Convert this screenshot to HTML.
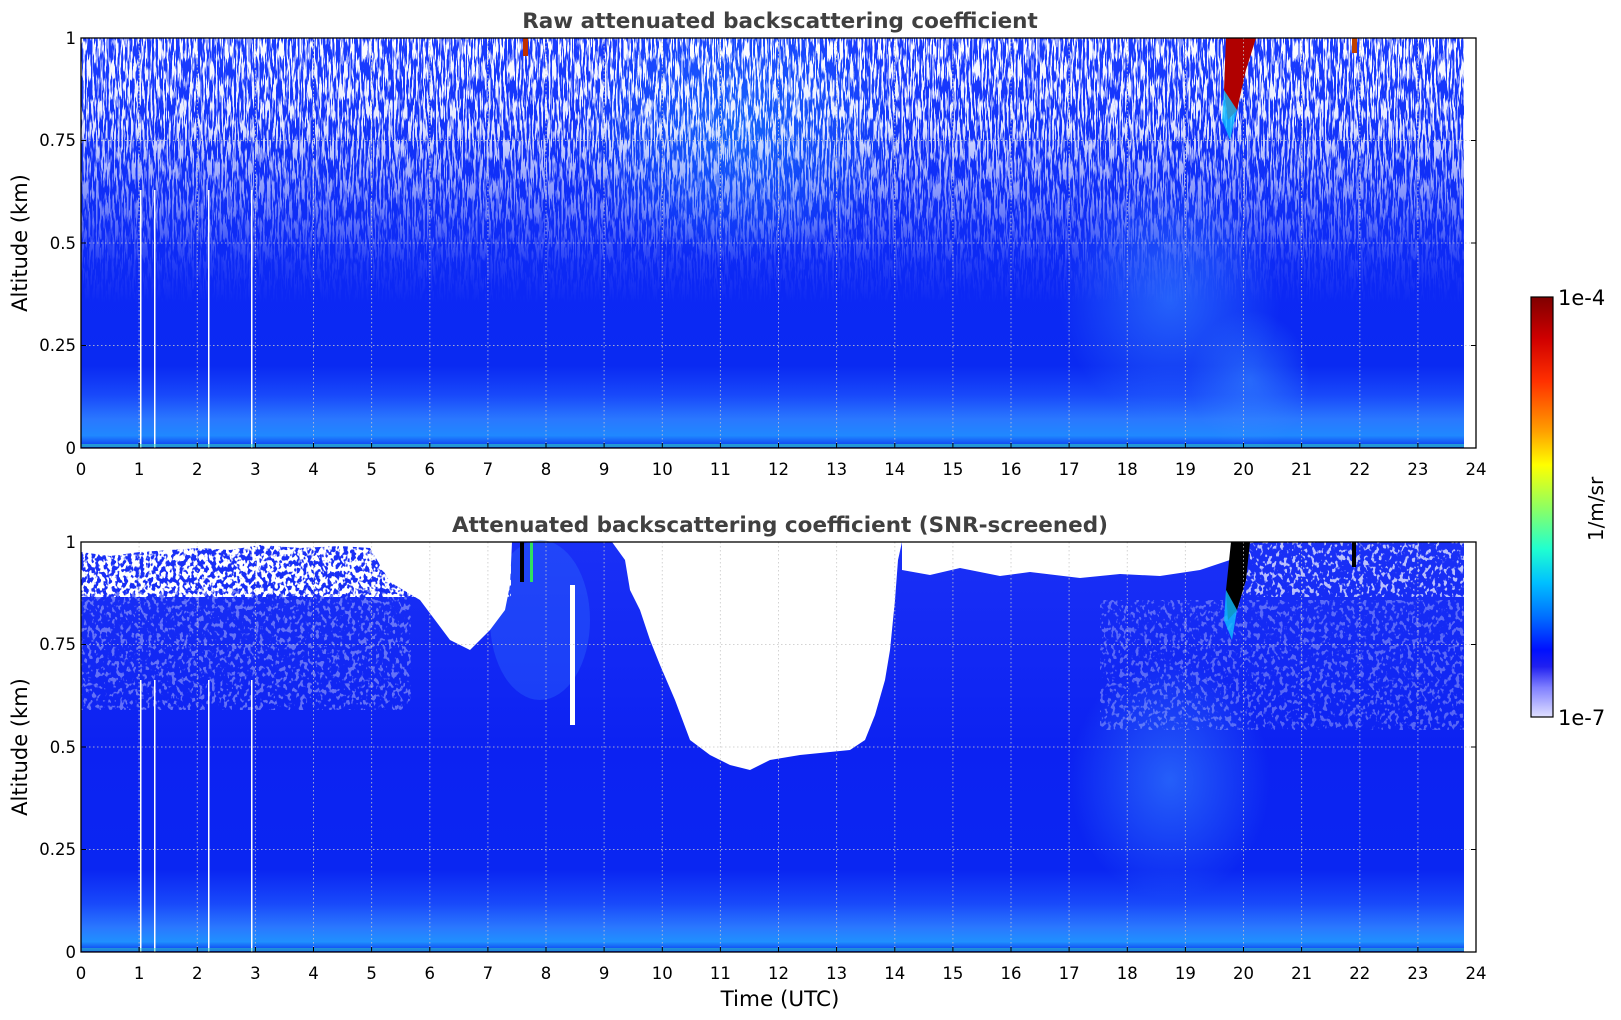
<!DOCTYPE html>
<html><head><meta charset="utf-8"><style>
html,body{margin:0;padding:0;background:#fff;}
svg{display:block;font-family:"DejaVu Sans","Liberation Sans",sans-serif;}
</style></head><body>
<svg width="1621" height="1020" viewBox="0 0 1621 1020" xmlns="http://www.w3.org/2000/svg">
<defs>
  <linearGradient id="gTop" x1="0" y1="0" x2="0" y2="1">
    <stop offset="0" stop-color="#1a3cff"/>
    <stop offset="0.3" stop-color="#1030f8"/>
    <stop offset="0.6" stop-color="#0c28f4"/>
    <stop offset="0.8" stop-color="#0a2af2"/>
    <stop offset="0.87" stop-color="#1848fa"/>
    <stop offset="0.93" stop-color="#2a78ff"/>
    <stop offset="0.97" stop-color="#2088ff"/>
    <stop offset="1" stop-color="#0a30f0"/>
  </linearGradient>
  <linearGradient id="gBot" x1="0" y1="0" x2="0" y2="1">
    <stop offset="0" stop-color="#1a30f6"/>
    <stop offset="0.5" stop-color="#0c22f2"/>
    <stop offset="0.8" stop-color="#0a26f2"/>
    <stop offset="0.88" stop-color="#1848fa"/>
    <stop offset="0.94" stop-color="#2a78ff"/>
    <stop offset="0.975" stop-color="#2090ff"/>
    <stop offset="1" stop-color="#0a30f0"/>
  </linearGradient>
  <linearGradient id="fadeMask" x1="0" y1="0" x2="0" y2="1">
    <stop offset="0" stop-color="#fff" stop-opacity="1"/>
    <stop offset="0.2" stop-color="#fff" stop-opacity="0.9"/>
    <stop offset="0.4" stop-color="#fff" stop-opacity="0.45"/>
    <stop offset="0.55" stop-color="#fff" stop-opacity="0.1"/>
    <stop offset="0.65" stop-color="#fff" stop-opacity="0"/>
  </linearGradient>
  <mask id="m1"><rect x="81" y="38" width="1395" height="410" fill="url(#fadeMask)"/></mask>
  <filter id="speck" x="0" y="0" width="100%" height="100%">
    <feTurbulence type="fractalNoise" baseFrequency="0.55 0.05" numOctaves="2" seed="3"/>
    <feColorMatrix type="matrix" values="0 0 0 0 1  0 0 0 0 1  0 0 0 0 1  14 0 0 0 -6.8"/>
  </filter>
  <filter id="speck2" x="0" y="0" width="100%" height="100%">
    <feTurbulence type="fractalNoise" baseFrequency="0.25 0.18" numOctaves="2" seed="7"/>
    <feColorMatrix type="matrix" values="0 0 0 0 1  0 0 0 0 1  0 0 0 0 1  12 0 0 0 -6.6"/>
  </filter>
  <filter id="speck3" x="0" y="0" width="100%" height="100%">
    <feTurbulence type="fractalNoise" baseFrequency="0.25 0.18" numOctaves="2" seed="11"/>
    <feColorMatrix type="matrix" values="0 0 0 0 1  0 0 0 0 1  0 0 0 0 1  12 0 0 0 -5.4"/>
  </filter>
  <linearGradient id="jet" x1="0" y1="0" x2="0" y2="1">
    <stop offset="0" stop-color="#7f0000"/>
    <stop offset="0.1" stop-color="#d00000"/>
    <stop offset="0.2" stop-color="#ff3000"/>
    <stop offset="0.32" stop-color="#ffa000"/>
    <stop offset="0.4" stop-color="#ffff00"/>
    <stop offset="0.5" stop-color="#90ff60"/>
    <stop offset="0.6" stop-color="#20ffd0"/>
    <stop offset="0.68" stop-color="#00c0ff"/>
    <stop offset="0.76" stop-color="#0070ff"/>
    <stop offset="0.84" stop-color="#0010ff"/>
    <stop offset="0.88" stop-color="#2020f0"/>
    <stop offset="0.93" stop-color="#8080ff"/>
    <stop offset="1" stop-color="#e0e0ff"/>
  </linearGradient>
  <radialGradient id="cyanGlow" cx="0.5" cy="0.5" r="0.5">
    <stop offset="0" stop-color="#3a90ff" stop-opacity="0.55"/>
    <stop offset="1" stop-color="#3a90ff" stop-opacity="0"/>
  </radialGradient>
  <radialGradient id="cyanGlow2" cx="0.5" cy="0.5" r="0.5">
    <stop offset="0" stop-color="#20c0ff" stop-opacity="0.35"/>
    <stop offset="1" stop-color="#20c0ff" stop-opacity="0"/>
  </radialGradient>
  <clipPath id="cTop"><rect x="81" y="38" width="1383" height="410"/></clipPath>
</defs>

<text x="780" y="28" text-anchor="middle" font-size="21.5" font-weight="bold" fill="#404040">Raw attenuated backscattering coefficient</text>
<text x="780" y="532" text-anchor="middle" font-size="21.5" font-weight="bold" fill="#404040">Attenuated backscattering coefficient (SNR-screened)</text>

<!-- ===== Top plot ===== -->
<rect x="81" y="38" width="1383" height="410" fill="url(#gTop)"/>
<ellipse cx="1170" cy="300" rx="110" ry="120" fill="url(#cyanGlow)"/>
<ellipse cx="1250" cy="380" rx="60" ry="70" fill="url(#cyanGlow)"/>
<g clip-path="url(#cTop)"><ellipse cx="740" cy="130" rx="170" ry="130" fill="url(#cyanGlow2)"/></g>
<rect x="81" y="38" width="1383" height="410" fill="#fff" filter="url(#speck)" mask="url(#m1)"/>
<polygon points="1226,38 1256,38 1246,70 1237,110 1228,120 1224,90" fill="#b00000"/>
<polygon points="1224,90 1237,110 1230,140 1222,120" fill="#10c0ff" opacity="0.8"/>
<rect x="523" y="38" width="5" height="18" fill="#c03000"/>
<rect x="1352" y="38" width="5" height="15" fill="#c04000"/>
<rect x="140" y="190" width="1.5" height="258" fill="#fff"/>
<rect x="154" y="190" width="1.5" height="258" fill="#fff"/>
<rect x="208" y="190" width="1.5" height="258" fill="#fff"/>
<rect x="251" y="190" width="1.5" height="258" fill="#fff"/>
<rect x="81" y="444" width="1383" height="3" fill="#30d0c0" opacity="0.6"/>

<!-- ===== Bottom plot ===== -->
<rect x="81" y="542" width="1383" height="410" fill="url(#gBot)"/>
<ellipse cx="1170" cy="780" rx="100" ry="120" fill="url(#cyanGlow)"/>
<ellipse cx="540" cy="620" rx="50" ry="80" fill="#3070ff" opacity="0.35"/>
<rect x="81" y="590" width="330" height="120" fill="#fff" filter="url(#speck2)" opacity="0.35"/>
<rect x="1100" y="600" width="364" height="130" fill="#fff" filter="url(#speck2)" opacity="0.3"/>
<rect x="81" y="542" width="430" height="55" fill="#fff" filter="url(#speck3)"/>
<rect x="1240" y="542" width="224" height="55" fill="#fff" filter="url(#speck2)" opacity="0.7"/>
<polygon fill="#fff" points="
81,542 81,552 110,556 140,552 170,550 200,548 230,550 260,545 300,548 340,546 370,548 390,582 420,600 450,640 470,650 490,630 505,610 510,585 512,542"/>
<polygon fill="#fff" points="
612,542 625,560 630,590 640,610 650,640 660,665 675,700 690,740 710,755 730,765 750,770 770,760 800,755 830,752 850,750 865,740 875,715 885,680 890,650 895,600 898,560 902,542"/>
<polygon fill="#fff" points="
902,542 902,570 930,575 960,568 1000,576 1030,572 1080,578 1120,574 1160,576 1200,570 1230,560 1232,542"/>
<rect x="570" y="585" width="5" height="140" fill="#fff"/>
<polygon points="1231,542 1250,542 1246,580 1237,610 1228,620 1226,590" fill="#000"/>
<polygon points="1226,590 1237,610 1232,640 1224,620" fill="#10c0ff" opacity="0.8"/>
<rect x="520" y="542" width="4" height="40" fill="#000"/>
<rect x="530" y="542" width="3" height="40" fill="#30e060"/>
<rect x="1352" y="542" width="4" height="25" fill="#000"/>
<rect x="140" y="680" width="1.5" height="272" fill="#fff"/>
<rect x="154" y="680" width="1.5" height="272" fill="#fff"/>
<rect x="208" y="680" width="1.5" height="272" fill="#fff"/>
<rect x="251" y="680" width="1.5" height="272" fill="#fff"/>
<rect x="81" y="948" width="1383" height="3" fill="#30d0c0" opacity="0.5"/>

<g stroke="#c8c8c8" stroke-width="1" stroke-dasharray="1.5,2.5" opacity="0.8">
  <path id="vg" d="M139.1,38V448M197.3,38V448M255.4,38V448M313.5,38V448M371.6,38V448M429.8,38V448M487.9,38V448M546,38V448M604.1,38V448M662.3,38V448M720.4,38V448M778.5,38V448M836.6,38V448M894.8,38V448M952.9,38V448M1011,38V448M1069.1,38V448M1127.3,38V448M1185.4,38V448M1243.5,38V448M1301.6,38V448M1359.8,38V448M1417.9,38V448"/>
  <path d="M81,140.5H1476M81,243H1476M81,345.5H1476"/>
  <use href="#vg" transform="translate(0,504)"/>
  <path d="M81,644.5H1476M81,747H1476M81,849.5H1476"/>
</g>

<rect x="81" y="38" width="1395" height="410" fill="none" stroke="#000" stroke-width="1.3"/>
<rect x="81" y="542" width="1395" height="410" fill="none" stroke="#000" stroke-width="1.3"/>
<g stroke="#000" stroke-width="1">
  <path id="tk" d="M139.1,448v-5M197.3,448v-5M255.4,448v-5M313.5,448v-5M371.6,448v-5M429.8,448v-5M487.9,448v-5M546,448v-5M604.1,448v-5M662.3,448v-5M720.4,448v-5M778.5,448v-5M836.6,448v-5M894.8,448v-5M952.9,448v-5M1011,448v-5M1069.1,448v-5M1127.3,448v-5M1185.4,448v-5M1243.5,448v-5M1301.6,448v-5M1359.8,448v-5M1417.9,448v-5M81,140.5h5M81,243h5M81,345.5h5M1476,140.5h-5M1476,243h-5M1476,345.5h-5"/>
  <use href="#tk" transform="translate(0,504)"/>
</g>

<g font-size="16.5" fill="#000" text-anchor="middle">
  <g id="xl">
  <text x="81" y="475">0</text><text x="139.1" y="475">1</text><text x="197.3" y="475">2</text><text x="255.4" y="475">3</text><text x="313.5" y="475">4</text><text x="371.6" y="475">5</text><text x="429.8" y="475">6</text><text x="487.9" y="475">7</text><text x="546" y="475">8</text><text x="604.1" y="475">9</text><text x="662.3" y="475">10</text><text x="720.4" y="475">11</text><text x="778.5" y="475">12</text><text x="836.6" y="475">13</text><text x="894.8" y="475">14</text><text x="952.9" y="475">15</text><text x="1011" y="475">16</text><text x="1069.1" y="475">17</text><text x="1127.3" y="475">18</text><text x="1185.4" y="475">19</text><text x="1243.5" y="475">20</text><text x="1301.6" y="475">21</text><text x="1359.8" y="475">22</text><text x="1417.9" y="475">23</text><text x="1476" y="475">24</text>
  </g>
  <use href="#xl" transform="translate(0,504)"/>
</g>
<g font-size="16.5" fill="#000" text-anchor="end">
  <text x="76" y="44">1</text><text x="76" y="146">0.75</text><text x="76" y="249">0.5</text><text x="76" y="351">0.25</text><text x="76" y="454">0</text>
  <text x="76" y="548">1</text><text x="76" y="650">0.75</text><text x="76" y="753">0.5</text><text x="76" y="855">0.25</text><text x="76" y="958">0</text>
</g>
<text transform="translate(27,243) rotate(-90)" text-anchor="middle" font-size="21" fill="#000">Altitude (km)</text>
<text transform="translate(27,747) rotate(-90)" text-anchor="middle" font-size="21" fill="#000">Altitude (km)</text>
<text x="780" y="1006" text-anchor="middle" font-size="21.5" fill="#000">Time (UTC)</text>

<rect x="1531" y="297" width="22" height="420" fill="url(#jet)" stroke="#000" stroke-width="1.2"/>
<text x="1558" y="305" font-size="21" fill="#000">1e-4</text>
<text x="1558" y="725" font-size="21" fill="#000">1e-7</text>
<text transform="translate(1603,509) rotate(-90)" text-anchor="middle" font-size="20" fill="#000">1/m/sr</text>
</svg>
</body></html>
